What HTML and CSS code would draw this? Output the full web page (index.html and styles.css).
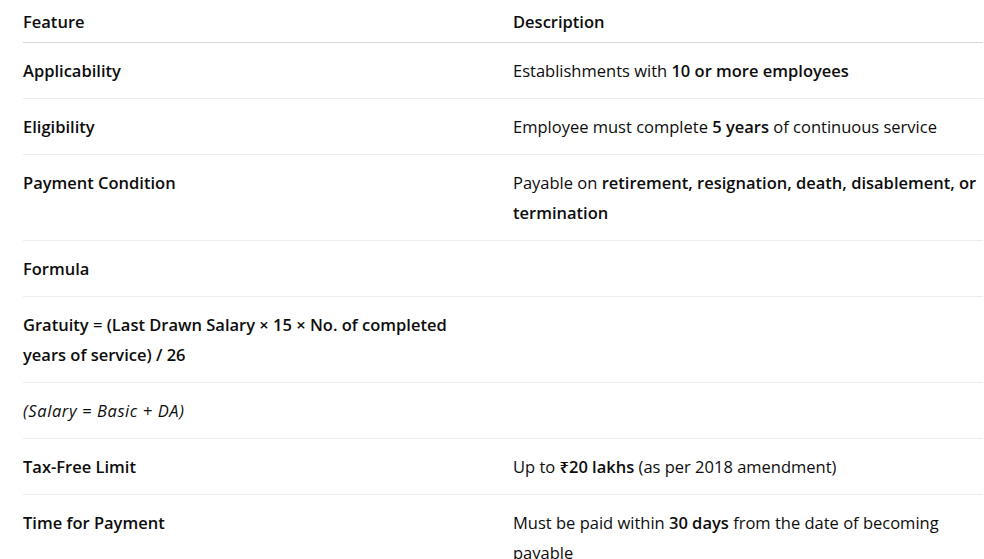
FILE: index.html
```html
<!DOCTYPE html>
<html lang="en">
<head>
<meta charset="utf-8">
<title>Gratuity</title>
<link rel="stylesheet" href="styles.css">
</head>
<body>
<div class="wrap">
<table class="tbl">
<colgroup><col class="c1"><col class="c2"></colgroup>
<thead>
<tr><th>Feature</th><th>Description</th></tr>
</thead>
<tbody>
<tr><td class="k">Applicability</td><td>Establishments with <strong>10 or more employees</strong></td></tr>
<tr><td class="k">Eligibility</td><td>Employee must complete <strong>5 years</strong> of continuous service</td></tr>
<tr><td class="k">Payment Condition</td><td>Payable on <strong>retirement, resignation, death, disablement, or termination</strong></td></tr>
<tr><td class="k">Formula</td><td></td></tr>
<tr><td class="k">Gratuity = (Last Drawn Salary × 15 × No. of completed years of service) / 26</td><td></td></tr>
<tr><td><em>(Salary = Basic + DA)</em></td><td></td></tr>
<tr><td class="k">Tax-Free Limit</td><td>Up to <strong>₹20 lakhs</strong> (as per 2018 amendment)</td></tr>
<tr><td class="k">Time for Payment</td><td>Must be paid within <strong>30 days</strong> from the date of becoming payable</td></tr>
</tbody>
</table>
</div>
</body>
</html>
```

FILE: styles.css
```css
html, body {
  margin: 0;
  padding: 0;
  background: #ffffff;
}
body {
  font-family: "Open Sans", "Noto Sans", "Liberation Sans", sans-serif;
  font-size: 16.5px;
  line-height: 30px;
  color: #0d0d0d;
}
.wrap {
  padding-left: 23px;
}
.tbl {
  border-collapse: collapse;
  table-layout: fixed;
  width: 960px;
}
.c1 { width: 490px; }
.c2 { width: 470px; }
.tbl th {
  text-align: left;
  font-weight: 600;
  padding: 7px 24px 5px 0;
  border-bottom: 1px solid #d9d9d9;
  vertical-align: top;
}
.tbl td {
  padding: 13px 24px 12px 0;
  border-bottom: 1px solid #ececec;
  vertical-align: top;
}
.tbl th:last-child,
.tbl td:last-child {
  padding-right: 0;
}
.tbl td.k, .tbl strong {
  font-weight: 600;
}
.tbl em {
  font-style: italic;
  letter-spacing: 0.6px;
}
```
